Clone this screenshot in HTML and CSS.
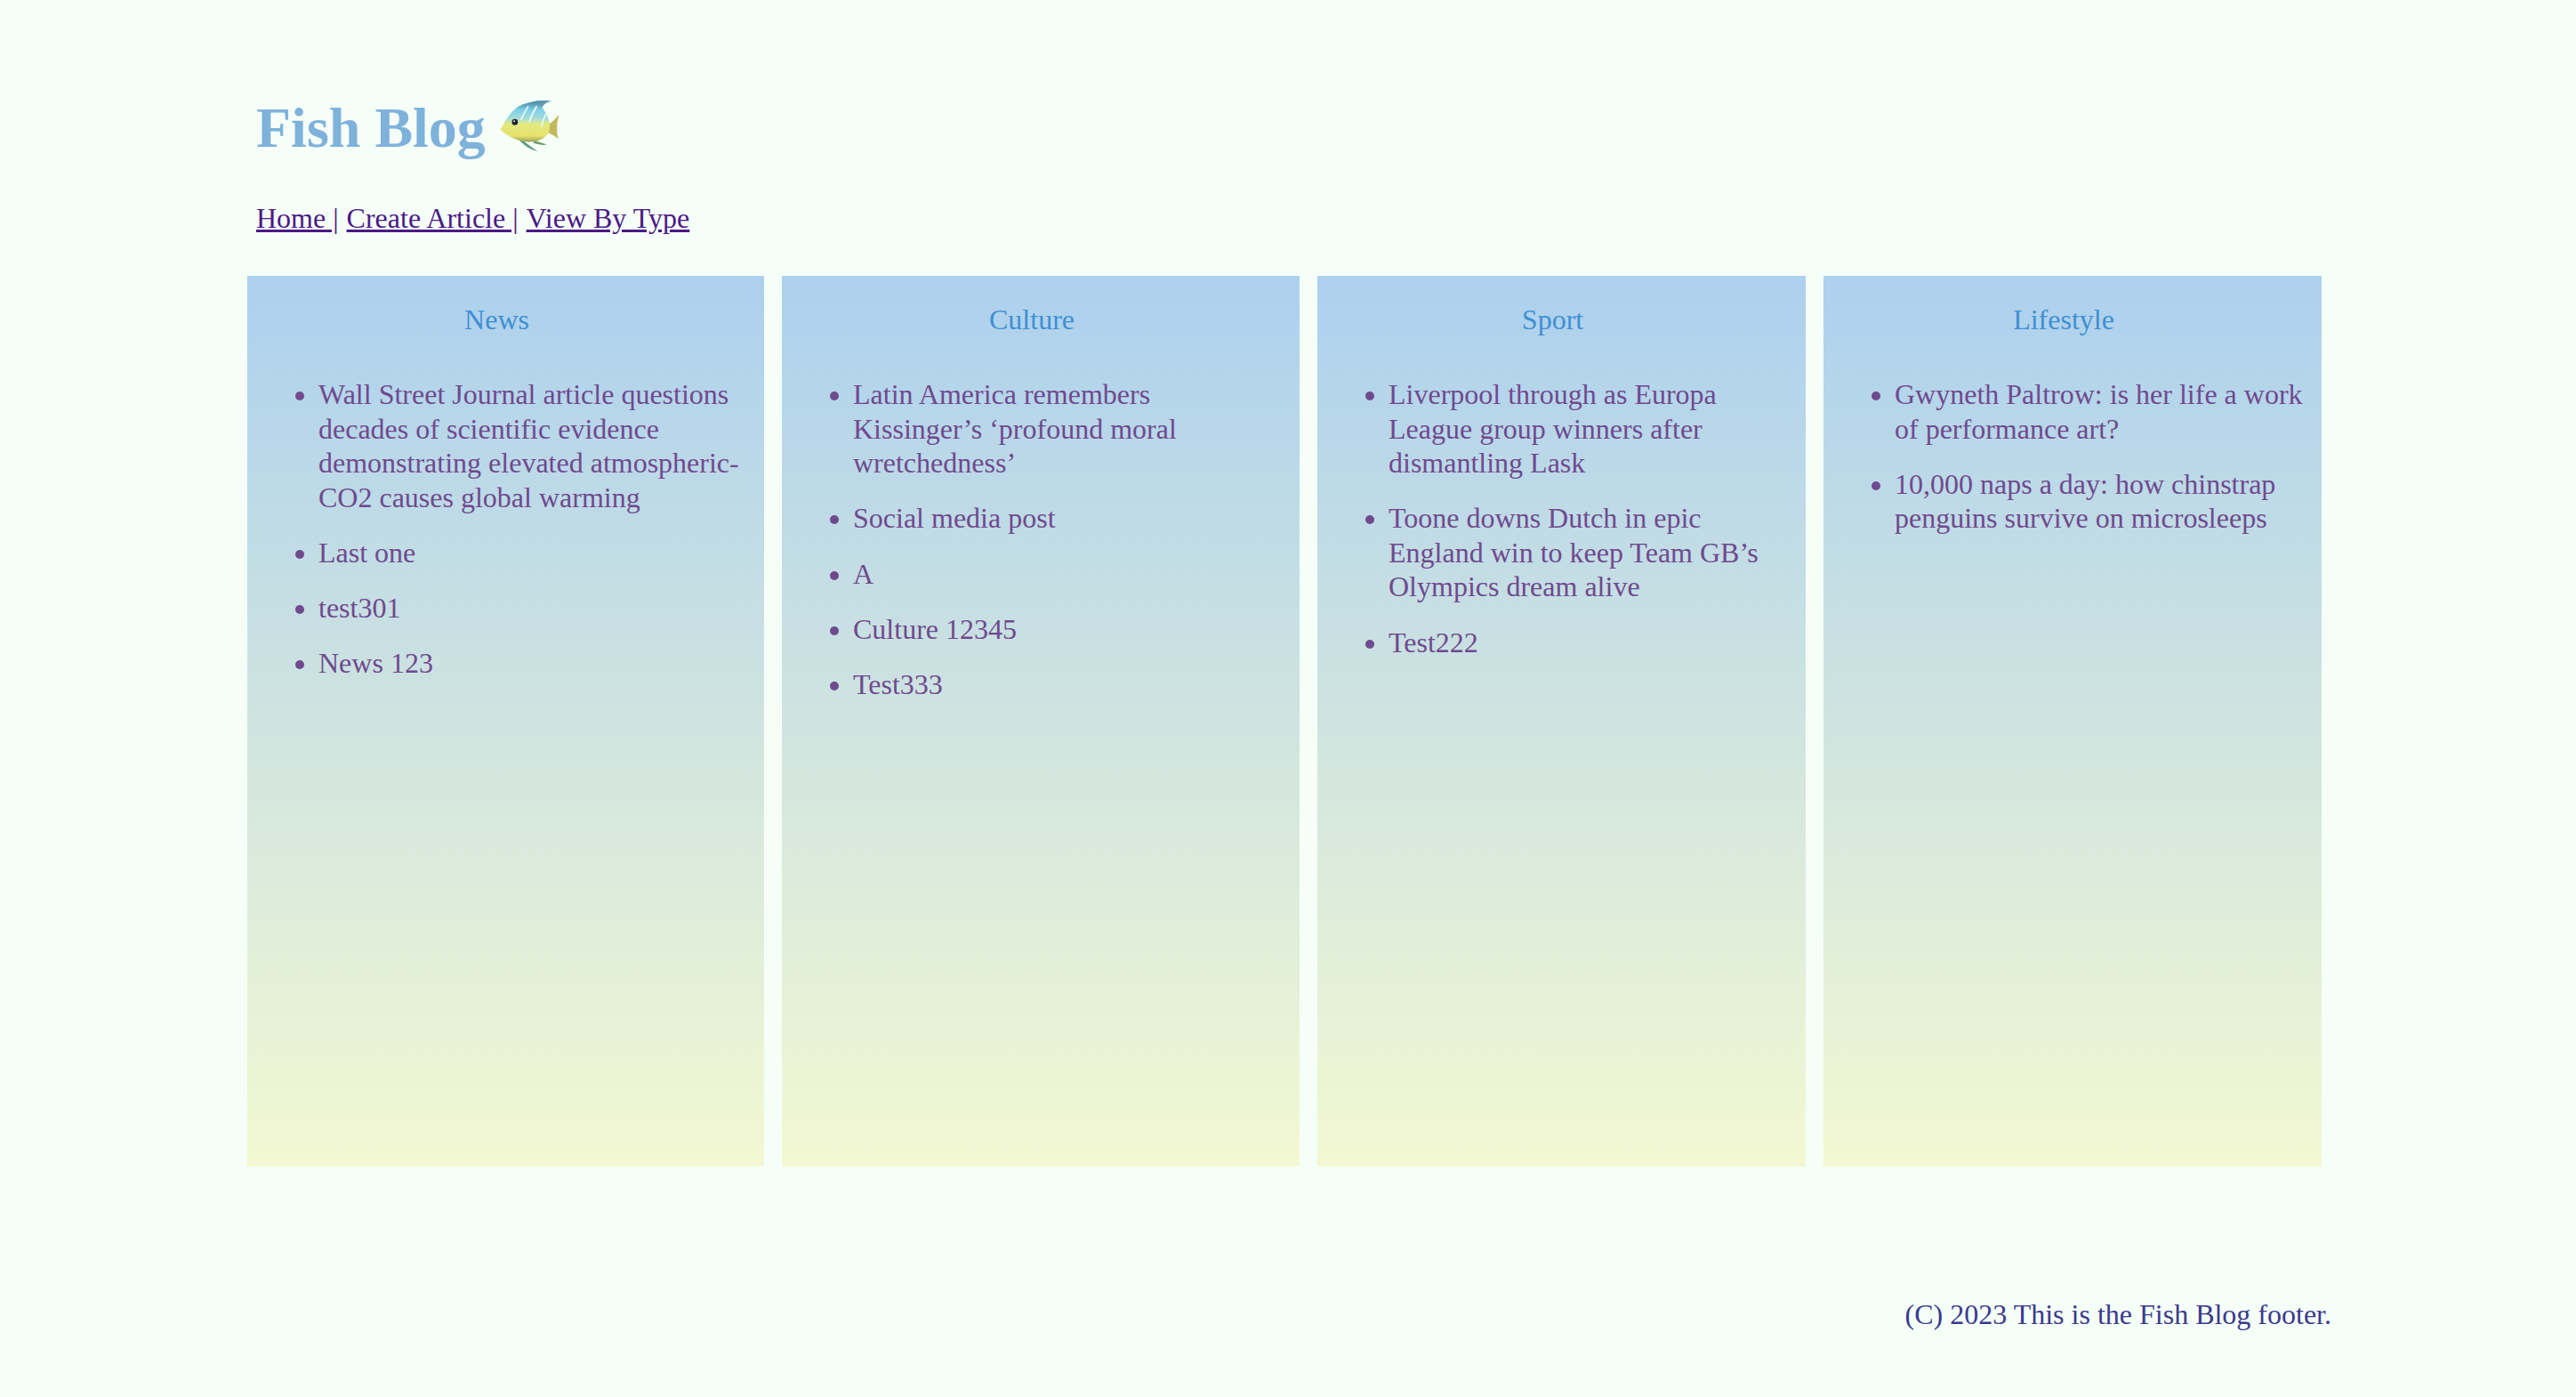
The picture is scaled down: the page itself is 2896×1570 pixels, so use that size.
FILE: index.html
```html
<!DOCTYPE html>
<html lang="en">
<head>
    <meta charset="UTF-8">
    <meta name="viewport" content="width=device-width, initial-scale=1.0">
    <title>Fish Blog</title>
    <link rel="stylesheet" href="styles.css">
</head>
<body>
    <header class="site-header">
        <h1 class="site-title">Fish Blog
            <svg class="fish" viewBox="22 19 65 57" aria-hidden="true">
                <defs>
                    <linearGradient id="fish-body" x1="0" y1="0" x2="0" y2="1">
                        <stop offset="0" stop-color="#4f8ea6"/>
                        <stop offset="0.2" stop-color="#7fd2e8"/>
                        <stop offset="0.42" stop-color="#a8dcd4"/>
                        <stop offset="0.55" stop-color="#e4ea80"/>
                        <stop offset="0.85" stop-color="#e6e26c"/>
                        <stop offset="1" stop-color="#98a05c"/>
                    </linearGradient>
                </defs>
                <!-- fins -->
                <path d="M50 23 C58 19 70 17 78 20 C72 20 68 24 66 30 Z" fill="#5b96ad"/>
                <path d="M74 45 C79 42 83 37 86 34 C83 43 83 52 85 60 C81 57 77 54 73 53 Z" fill="#c4b95a"/>
                <path d="M46 61 C52 65 58 70 63 73 C56 72 50 68 44 62 Z" fill="#5f9a85"/>
                <path d="M60 62 C64 63 69 65 73 66 C68 67 62 66 58 64 Z" fill="#6f9a6a"/>
                <!-- body -->
                <path d="M23 50 C28 42 32 33 40 27 C47 22 57 20 62 21 C70 27 76 38 76 47 C76 56 68 62 58 63 C44 64 32 58 23 50 Z" fill="url(#fish-body)"/>
                <!-- stripes -->
                <path d="M53 25 C50 30 47 35 45 40" fill="none" stroke="#e8f8fa" stroke-width="1.6"/>
                <path d="M62 25 C59 30 56 36 54 42" fill="none" stroke="#e8f8fa" stroke-width="1.8"/>
                <path d="M72 33 C70 37 68 42 67 47" fill="none" stroke="#e8f8fa" stroke-width="1.6"/>
                <circle cx="38.7" cy="42" r="3.2" fill="#1d2430"/>
                <circle cx="38" cy="41" r="0.9" fill="#fff"/>
            </svg>
        </h1>
        <nav class="site-nav">
            <a href="#">Home |</a>
            <a href="#">Create Article |</a>
            <a href="#">View By Type</a>
        </nav>
    </header>

    <main class="columns">
        <section class="column">
            <h2 class="column-title">News</h2>
            <ul class="article-list">
                <li>Wall Street Journal article questions decades of scientific evidence demonstrating elevated atmospheric-CO2 causes global warming</li>
                <li>Last one</li>
                <li>test301</li>
                <li>News 123</li>
            </ul>
        </section>
        <section class="column">
            <h2 class="column-title">Culture</h2>
            <ul class="article-list">
                <li>Latin America remembers Kissinger’s ‘profound moral wretchedness’</li>
                <li>Social media post</li>
                <li>A</li>
                <li>Culture 12345</li>
                <li>Test333</li>
            </ul>
        </section>
        <section class="column">
            <h2 class="column-title">Sport</h2>
            <ul class="article-list">
                <li>Liverpool through as Europa League group winners after dismantling Lask</li>
                <li>Toone downs Dutch in epic England win to keep Team GB’s Olympics dream alive</li>
                <li>Test222</li>
            </ul>
        </section>
        <section class="column">
            <h2 class="column-title">Lifestyle</h2>
            <ul class="article-list">
                <li>Gwyneth Paltrow: is her life a work of performance art?</li>
                <li>10,000 naps a day: how chinstrap penguins survive on microsleeps</li>
            </ul>
        </section>
    </main>

    <footer class="site-footer">(C) 2023 This is the Fish Blog footer.</footer>
</body>
</html>
```

FILE: styles.css
```css
body {
    margin: 0;
    padding: 0 275px 0 278px;
    background-color: #f5fff8;
    font-family: "Liberation Serif", "Times New Roman", serif;
    font-size: 32px;
}
.site-header {
    padding: 107px 0 0 10px;
}
.site-title {
    margin: 0;
    font-size: 64px;
    line-height: 74px;
    color: #7fb2db;
}
.fish {
    width: 69px;
    height: 60px;
    vertical-align: -8px;
    margin-left: -1px;
}
.site-nav {
    display: flex;
    gap: 9px;
    margin-top: 46px;
    line-height: 37px;
}
.site-nav a {
    color: #4b1a85;
}
.columns {
    display: grid;
    grid-template-columns: 581px 582px 549px 560px;
    gap: 20px;
    margin-top: 46px;
}
.column {
    height: 1001px;
    background: linear-gradient(to bottom, #acd0ee, #f3f8d2);
}
.column-title {
    margin: 0;
    padding-top: 31px;
    padding-right: 20px;
    font-size: 32px;
    font-weight: normal;
    line-height: 37px;
    text-align: center;
    color: #3f8fd2;
}
.article-list {
    margin: 46px 0 0;
    padding: 0 20px 0 80px;
    color: #6f4a8e;
    line-height: 38.5px;
}
.article-list li {
    margin-bottom: 23.8px;
}
.site-footer {
    margin-top: 148px;
    line-height: 37px;
    text-align: right;
    color: #3a3a8c;
}
```
